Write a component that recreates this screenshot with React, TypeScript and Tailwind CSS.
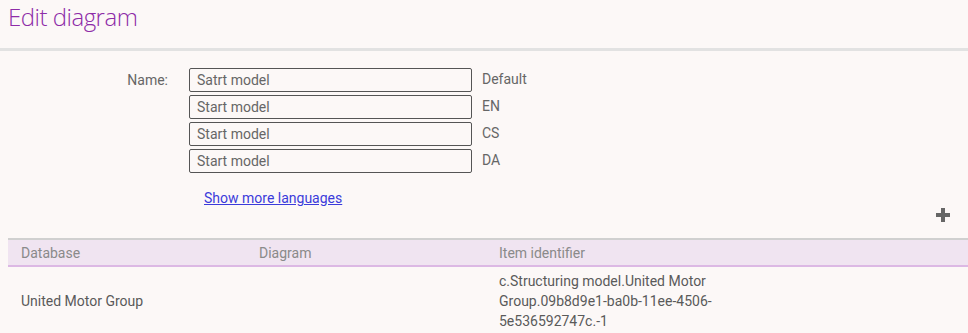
import React from "react";

const langs = [
  { value: "Satrt model", label: "Default" },
  { value: "Start model", label: "EN" },
  { value: "Start model", label: "CS" },
  { value: "Start model", label: "DA" },
];

export default function App() {
  return (
    <div className="min-h-[333px] w-full bg-[#fcf8f7] text-[#555]" style={{ fontFamily: "Roboto, 'Liberation Sans', sans-serif" }}>
      <div className="h-[48px] px-[8px] pt-[1px]">
        <h1 className="text-[24px] font-light leading-[32px] text-[#8e2ca8] tracking-[-0.5px]" style={{ fontFamily: "'Open Sans', 'Noto Sans', sans-serif" }}>
          Edit diagram
        </h1>
      </div>
      <div className="h-[3px] bg-[#e2e2e2]" />
      <div className="pt-[17px]">
        <div className="flex">
          <div className="w-[168px] pt-[3px] text-right text-[14px] leading-[18px] text-[#666]">Name:</div>
          <div className="ml-[21px] flex flex-col gap-[3px]">
            {langs.map((l, i) => (
              <div key={i} className="flex items-start">
                <div className="flex h-[24px] w-[283px] items-center rounded-[2px] border border-[#555] px-[7px] pt-[1px] text-[14px] text-[#666]">
                  {l.value}
                </div>
                <div className="ml-[10px] pt-[2px] text-[14px] leading-[18px] text-[#666]">{l.label}</div>
              </div>
            ))}
            <div className="ml-[15px] mt-[13px] text-[14px] leading-[18px]">
              <a href="#" className="text-[#3b3bdb] underline">Show more languages</a>
            </div>
          </div>
        </div>
        <div className="flex justify-end pr-[18px] pt-[1px]">
          <svg width="14" height="14" viewBox="0 0 14 14" className="block">
            <path d="M5 0h4v5h5v4H9v5H5V9H0V5h5z" fill="#666" />
          </svg>
        </div>
        <div className="ml-[8px] mt-[16px]">
          <div className="flex h-[29px] items-center border-t-2 border-b-2 border-t-[#d0d0d0] border-b-[#dcb8e4] bg-[#f0e4f1] pt-[1px] text-[14px] text-[#8a8a8a]">
            <div className="w-[238px] pl-[13px]">Database</div>
            <div className="w-[240px] pl-[13px]">Diagram</div>
            <div className="w-[238px] pl-[13px]">Item identifier</div>
          </div>
          <div className="flex items-center py-[4px] text-[14px] leading-[20px] text-[#5a5a5a]">
            <div className="w-[238px] pl-[13px]">United Motor Group</div>
            <div className="w-[240px] pl-[13px]"></div>
            <div className="w-[238px] pl-[13px] pr-[2px]">c.Structuring model.United Motor Group.09b8d9e1-ba0b-11ee-4506-5e536592747c.-1</div>
          </div>
        </div>
      </div>
    </div>
  );
}
